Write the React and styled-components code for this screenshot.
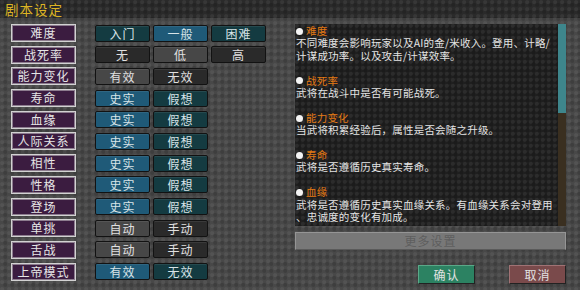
import { Fragment } from "react";
import styled, { createGlobalStyle } from "styled-components";

const GlobalStyle = createGlobalStyle`
  html, body {
    margin: 0;
    padding: 0;
    background: #464646;
  }
  * {
    box-sizing: border-box;
  }
`;

const CJK = `"Noto Sans CJK SC", "Noto Sans", sans-serif`;

const texture = `
  radial-gradient(circle at 30% 30%, rgba(255,255,255,0.06) 1.5px, transparent 2.5px),
  radial-gradient(circle at 75% 70%, rgba(0,0,0,0.14) 1.5px, transparent 2.5px)
`;

const Screen = styled.div`
  width: 580px;
  height: 290px;
  overflow: hidden;
  background-color: #484848;
  background-image: ${texture};
  background-size: 7px 7px;
  font-family: ${CJK};
  display: flex;
  flex-direction: column;
`;

const TitleBar = styled.div`
  height: 18px;
  background-color: #2a2a2a;
  background-image: ${texture};
  background-size: 7px 7px;
  color: #dcb424;
  font-size: 13.5px;
  line-height: 18px;
  padding-left: 5px;
  letter-spacing: 1px;
`;

const Main = styled.div`
  display: flex;
  padding: 6px 14px 0 11px;
  gap: 19px;
`;

const Settings = styled.div`
  display: grid;
  grid-template-columns: 65px auto;
  column-gap: 19px;
  row-gap: 3.7px;
  grid-auto-rows: 18px;
  width: 265px;
`;

const Label = styled.div`
  background: #3b1c40;
  border: 1px solid #d2d2d2;
  box-shadow: inset 0 0 0 1px #8c7c8e;
  color: #e6e6e6;
  font-size: 12px;
  line-height: 16px;
  letter-spacing: 1px;
  text-align: center;
`;

const Options = styled.div`
  display: flex;
  gap: 3px;
  align-items: center;
`;

const palettes = {
  teal: { on: "#1f5a78", off: "#143b41", text: "#d8e4e8" },
  gray: { on: "#474747", off: "#2a2a2a", text: "#e0e0e0" },
};

const Option = styled.div`
  width: 55px;
  height: 17px;
  border: 1px solid #121212;
  border-radius: 2px;
  background: ${(p) => (p.$on ? palettes[p.$tone].on : palettes[p.$tone].off)};
  box-shadow: inset 0 1px 0 rgba(255, 255, 255, 0.08);
  color: ${(p) => palettes[p.$tone].text};
  font-size: 12px;
  line-height: 15px;
  letter-spacing: 1px;
  text-align: center;
`;

const Side = styled.div`
  width: 271px;
  display: flex;
  flex-direction: column;
`;

const InfoBox = styled.div`
  height: 202px;
  display: flex;
  background-color: #1f1f1f;
  background-image: ${texture};
  background-size: 6px 6px;
`;

const InfoText = styled.div`
  flex: 1;
  overflow: hidden;
  padding: 1px 0 0 1px;
  font-size: 10.5px;
  line-height: 12.4px;
  letter-spacing: 0.2px;
  color: #e4e4e4;
  white-space: nowrap;
`;

const Entry = styled.div`
  margin-bottom: 12.4px;
`;

const Heading = styled.div`
  display: flex;
  align-items: center;
  gap: 3px;
  color: #e47a14;
`;

const Dot = styled.span`
  width: 7px;
  height: 7px;
  border-radius: 50%;
  background: #f4f4f4;
`;

const ScrollTrack = styled.div`
  width: 8px;
  background: #3a2f20;
  display: flex;
  flex-direction: column;
`;

const ScrollThumb = styled.div`
  height: 89px;
  background: #3e868c;
`;

const MoreButton = styled.div`
  margin-top: 6px;
  height: 18px;
  background: #787878;
  border: 1px solid #959595;
  border-bottom-color: #5a5a5a;
  color: #5e5e5e;
  font-size: 12px;
  line-height: 16px;
  letter-spacing: 1px;
  text-align: center;
`;

const Footer = styled.div`
  margin-top: 15px;
  display: flex;
  justify-content: flex-end;
  gap: 34px;
`;

const ActionButton = styled.div`
  width: 57px;
  height: 19px;
  background: ${(p) => (p.$kind === "ok" ? "#2c8262" : "#7a4a4b")};
  border: 1px solid ${(p) => (p.$kind === "ok" ? "#5aa888" : "#a07274")};
  border-bottom-color: #222;
  border-right-color: #222;
  color: #e2e2e2;
  font-size: 12px;
  line-height: 17px;
  letter-spacing: 1px;
  text-align: center;
`;

const rows = [
  { label: "难度", tone: "teal", options: ["入门", "一般", "困难"], on: 1 },
  { label: "战死率", tone: "gray", options: ["无", "低", "高"], on: 1 },
  { label: "能力变化", tone: "gray", options: ["有效", "无效"], on: 0 },
  { label: "寿命", tone: "teal", options: ["史实", "假想"], on: 0 },
  { label: "血缘", tone: "teal", options: ["史实", "假想"], on: 0 },
  { label: "人际关系", tone: "teal", options: ["史实", "假想"], on: 0 },
  { label: "相性", tone: "teal", options: ["史实", "假想"], on: 0 },
  { label: "性格", tone: "teal", options: ["史实", "假想"], on: 0 },
  { label: "登场", tone: "teal", options: ["史实", "假想"], on: 0 },
  { label: "单挑", tone: "gray", options: ["自动", "手动"], on: 0 },
  { label: "舌战", tone: "gray", options: ["自动", "手动"], on: 0 },
  { label: "上帝模式", tone: "teal", options: ["有效", "无效"], on: 0 },
];

const entries = [
  {
    title: "难度",
    lines: [
      "不同难度会影响玩家以及AI的金/米收入。登用、计略/",
      "计谋成功率。以及攻击/计谋效率。",
    ],
  },
  { title: "战死率", lines: ["武将在战斗中是否有可能战死。"] },
  { title: "能力变化", lines: ["当武将积累经验后，属性是否会随之升级。"] },
  { title: "寿命", lines: ["武将是否遵循历史真实寿命。"] },
  {
    title: "血缘",
    lines: [
      "武将是否遵循历史真实血缘关系。有血缘关系会对登用",
      "、忠诚度的变化有加成。",
    ],
  },
];

export default function App() {
  return (
    <>
      <GlobalStyle />
      <Screen>
        <TitleBar>剧本设定</TitleBar>
        <Main>
          <Settings>
            {rows.map((row) => (
              <Fragment key={row.label}>
                <Label>{row.label}</Label>
                <Options>
                  {row.options.map((opt, i) => (
                    <Option key={opt} $tone={row.tone} $on={i === row.on}>
                      {opt}
                    </Option>
                  ))}
                </Options>
              </Fragment>
            ))}
          </Settings>
          <Side>
            <InfoBox>
              <InfoText>
                {entries.map((entry) => (
                  <Entry key={entry.title}>
                    <Heading>
                      <Dot />
                      {entry.title}
                    </Heading>
                    {entry.lines.map((line) => (
                      <div key={line}>{line}</div>
                    ))}
                  </Entry>
                ))}
              </InfoText>
              <ScrollTrack>
                <ScrollThumb />
              </ScrollTrack>
            </InfoBox>
            <MoreButton>更多设置</MoreButton>
            <Footer>
              <ActionButton $kind="ok">确认</ActionButton>
              <ActionButton $kind="cancel">取消</ActionButton>
            </Footer>
          </Side>
        </Main>
      </Screen>
    </>
  );
}
